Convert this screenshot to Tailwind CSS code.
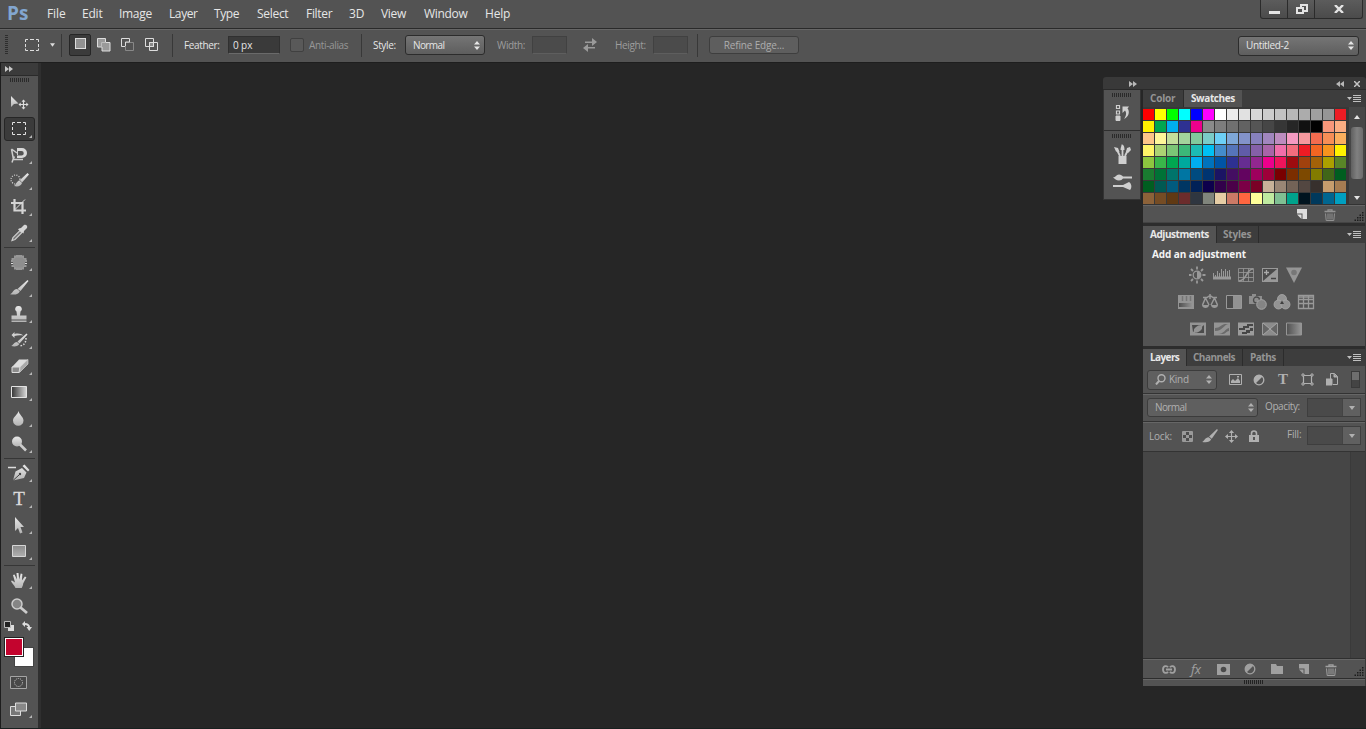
<!DOCTYPE html>
<html lang="en">

<head>
    <meta charset="UTF-8">
    <meta name="viewport" content="width=device-width, initial-scale=1.0">
    <title>Photoshop</title>
    <script src="https://cdn.jsdelivr.net/npm/@tailwindcss/browser@4"></script>
</head>

<body class="w-[1366px] h-[729px] overflow-hidden bg-[#262626] font-['Open_Sans','Noto_Sans',sans-serif] text-[#e6e6e6] flex flex-col">

    <!-- shared icon shapes -->
    <svg width="0" height="0" class="absolute">
        <defs>
            <linearGradient id="silver" x1="0" y1="0" x2="0" y2="1">
                <stop offset="0" stop-color="#e8e8e8" />
                <stop offset="1" stop-color="#b4b4b4" />
            </linearGradient>
            <linearGradient id="box" x1="0" y1="0" x2="0" y2="1">
                <stop offset="0" stop-color="#8a8a8a" />
                <stop offset="1" stop-color="#b0b0b0" />
            </linearGradient>
            <linearGradient id="fade" x1="0" x2="1">
                <stop offset="0" stop-color="#333" />
                <stop offset="1" stop-color="#d8d8d8" />
            </linearGradient>
            <linearGradient id="fade2" x1="0" x2="1">
                <stop offset="0" stop-color="#505050" />
                <stop offset="1" stop-color="#989898" />
            </linearGradient>
            <symbol id="ff" viewBox="0 0 8 6"><path d="M0 0l4 3-4 3zM4 0l4 3-4 3z" fill="currentColor" /></symbol>
            <symbol id="updown" viewBox="0 0 6 9"><path d="M0 3.6L3 0l3 3.6zM0 5.4h6L3 9z" fill="currentColor" /></symbol>
            <symbol id="down" viewBox="0 0 6 4"><path d="M0 0h6L3 4z" fill="currentColor" /></symbol>
            <symbol id="menu" viewBox="0 0 14 8"><path d="M0 2h5L2.500 5z" fill="currentColor" /><path d="M6 .5h8M6 2.500h8M6 4.500h8M6 6.500h8" stroke="currentColor" /></symbol>
            <symbol id="brush" viewBox="0 0 18 16"><path d="M17 0l1 1-7 10-3-2.500z" fill="currentColor" /><path d="M7.500 9.500l2.800 2.300c-1 3-5 4-10.300 3 3-1 3-5 7.500-5.300z" fill="currentColor" /></symbol>
            <symbol id="page" viewBox="0 0 10 10"><path d="M0 0h10v10H5.500V4.500H0z" fill="currentColor" /><path d="M0 5.500h4.500V10z" fill="currentColor" /></symbol>
            <symbol id="trash" viewBox="0 0 12 12"><path d="M.5 2.500h11M4 2V.8h4V2" stroke="currentColor" stroke-width="1.300" fill="none" /><path d="M1.500 4.500l.7 7h7.600l.7-7M4 4.500v6M6 4.500v6M8 4.500v6" stroke="currentColor" fill="none" /></symbol>
            <symbol id="resize" viewBox="0 0 10 10"><path d="M8 0h1.500v1.500H8zM5.500 2.500H7V4H5.500zM8 2.500h1.500V4H8zM3 5h1.500v1.500H3zM5.500 5H7v1.500H5.500zM8 5h1.500v1.500H8zM.5 7.500H2V9H.5zM3 7.500h1.500V9H3zM5.500 7.500H7V9H5.500zM8 7.500h1.500V9H8z" fill="#1c1c1c" /></symbol>
            <symbol id="move" viewBox="0 0 14 14"><path d="M7 1v12M1 7h12" stroke="currentColor" stroke-width="1.200" /><path d="M7 0l2.800 3.200H4.200zM7 14l2.800-3.200H4.200zM0 7l3.200-2.800v5.600zM14 7l-3.200-2.800v5.600z" fill="currentColor" /></symbol>
            <symbol id="half" viewBox="0 0 12 12"><circle cx="6" cy="6" r="4.800" fill="none" stroke="currentColor" stroke-width="1.300" /><path d="M9.500 2.500a4.900 4.900 0 0 0-7 7z" fill="currentColor" /></symbol>
            <symbol id="corner" viewBox="0 0 3 3"><path d="M3 0v3H0z" fill="#b8b8b8" /></symbol>
        </defs>
    </svg>

    <!-- menu bar -->
    <header class="h-[29px] shrink-0 bg-[#535353] border-b border-[#2a2a2a] flex items-start text-[12px] leading-[28px] whitespace-nowrap">
        <div class="w-[47px] pl-[7px] text-[19px] font-bold leading-[26px] text-[#82a6d0]">Ps</div>
        <div class="w-[35px] tracking-[-0.1px]">File</div>
        <div class="w-[37px] tracking-[-0.2px]">Edit</div>
        <div class="w-[50px] tracking-[-0.3px]">Image</div>
        <div class="w-[45px] tracking-[-0.4px]">Layer</div>
        <div class="w-[43px] tracking-[-0.4px]">Type</div>
        <div class="w-[49px] tracking-[-0.3px]">Select</div>
        <div class="w-[43px] tracking-[-0.3px]">Filter</div>
        <div class="w-[32px]">3D</div>
        <div class="w-[43px] tracking-[-0.3px]">View</div>
        <div class="w-[61px] tracking-[-0.3px]">Window</div>
        <div class="w-[40px] tracking-[-0.2px]">Help</div>
        <div class="ml-auto mr-[3px] flex h-[19px] rounded-b-[3px] border border-t-0 border-[#2b2b2b] bg-linear-to-b from-[#5c5c5c] to-[#4b4b4b]">
            <div class="w-[27px] border-r border-[#2b2b2b] flex justify-center"><div class="mt-[11px] w-[11px] h-[3px] bg-[#e4e4e4]"></div></div>
            <div class="w-[27px] border-r border-[#2b2b2b] flex justify-center">
                <svg class="mt-[4px] ml-[1px]" width="12" height="11" viewBox="0 0 12 11" fill="none" stroke="#e4e4e4" stroke-width="2"><path d="M5 3V1h6v6H8" /><path d="M1 4h6v5H1z" /></svg>
            </div>
            <div class="w-[47px] flex justify-center">
                <svg class="mt-[5px]" width="10" height="8" viewBox="0 0 10 8" stroke="#e4e4e4" stroke-width="2.400"><path d="M1 0l8 8M9 0L1 8" /></svg>
            </div>
        </div>
    </header>

    <!-- options bar -->
    <div class="h-[33px] shrink-0 bg-[#535353] border-t border-[#666] pb-[2px] flex items-center text-[10px] font-medium tracking-[-0.35px] whitespace-nowrap">
        <div class="ml-[5px] w-[3px] h-[20px] bg-[repeating-linear-gradient(#2e2e2e_0_1px,transparent_1px_2px)]"></div>
        <svg class="ml-[17px]" width="14" height="12" viewBox="0 0 14 12" fill="none" stroke="#dedede"><path d="M.5 3V.5H3M5 .5h4M11 .5h2.500V3M13.500 5v3M13.500 9.500v2H11M9 11.500H5M3 11.500H.5v-2M.5 8V5" /></svg>
        <svg class="ml-[11px] text-[#ddd]" width="5" height="4"><use href="#down" /></svg>
        <div class="ml-[6px] w-px h-[23px] bg-[#383838]"></div>
        <div class="ml-[7px] w-[22px] h-[22px] rounded-[2px] border border-[#262626] bg-[#3b3b3b] pl-[5px] pt-[3px]"><div class="w-[11px] h-[11px] border border-[#ddd] bg-[#919191]"></div></div>
        <svg class="ml-[6px]" width="14" height="14" viewBox="0 0 14 14"><path d="M.5.500h8v4h4.500v8.500h-8V9H.5z" fill="#999" stroke="#ddd" /><path d="M4.500 9V4.500H9" fill="none" stroke="#bbb" /></svg>
        <svg class="ml-[10px]" width="14" height="14" viewBox="0 0 14 14" fill="none"><path d="M4.500 4.500h8v8h-8z" stroke="#888" /><path d="M4 8.500H.5v-8h8V4H4.500v4" stroke="#ddd" /></svg>
        <svg class="ml-[10px]" width="14" height="14" viewBox="0 0 14 14" fill="none" stroke="#ddd"><path d="M4.500 4.500h4v4h-4z" fill="#888" /><path d="M.5.500h8v8h-8zM4.500 4.500h8v8h-8z" /></svg>
        <div class="ml-[13px] w-px h-[23px] bg-[#383838]"></div>
        <div class="ml-[11px] w-[44px]">Feather:</div>
        <div class="w-[52px] h-[18px] bg-[#3a3a3a] border border-[#303030] border-b-[#6a6a6a] pl-[4px] leading-[17px] tracking-[-0.1px]">0 px</div>
        <div class="ml-[10px] w-[14px] h-[14px] rounded-[2px] border border-[#404040] bg-[#595959]"></div>
        <div class="ml-[5px] w-[52px] text-[#979797]">Anti-alias</div>
        <div class="w-px h-[23px] bg-[#383838]"></div>
        <div class="ml-[11px] w-[32px]">Style:</div>
        <div class="w-[80px] h-[20px] rounded-[3px] border border-[#2c2c2c] bg-linear-to-b from-[#757575] to-[#5e5e5e] flex items-center justify-between pl-[7px] pr-[4px] tracking-[-0.6px]">Normal<svg width="6" height="9"><use href="#updown" /></svg></div>
        <div class="ml-[12px] w-[35px] text-[#9d9d9d]">Width:</div>
        <div class="w-[35px] h-[18px] bg-[#4b4b4b] border border-[#414141] border-b-[#5e5e5e]"></div>
        <svg class="ml-[16px]" width="14" height="14" viewBox="0 0 14 14" fill="#9a9a9a"><path d="M2 3.500h7V0l5 4-5 4V5H2zM12 9H5V6L0 10l5 4v-3.500h7z" /></svg>
        <div class="ml-[18px] w-[38px] text-[#9d9d9d]">Height:</div>
        <div class="w-[35px] h-[18px] bg-[#4b4b4b] border border-[#414141] border-b-[#5e5e5e]"></div>
        <div class="ml-[9px] w-px h-[23px] bg-[#383838]"></div>
        <div class="ml-[11px] w-[90px] h-[18px] rounded-[3px] border border-[#3e3e3e] bg-[#5e5e5e] text-center leading-[16px] tracking-[-0.15px] text-[#adadad]">Refine Edge...</div>
        <div class="ml-auto mr-[7px] mt-px w-[121px] h-[20px] rounded-[3px] border border-[#2c2c2c] bg-linear-to-b from-[#757575] to-[#5e5e5e] flex items-center justify-between pl-[7px] pr-[4px]">Untitled-2<svg width="6" height="9"><use href="#updown" /></svg></div>
    </div>

    <!-- workspace -->
    <main class="flex-1 min-h-0 flex items-start border-t border-[#1e1e1e] border-b border-b-[#18201f]">

        <!-- toolbox -->
        <aside class="w-[41px] h-[665px] shrink-0 border-x border-r-3 border-[#1d1d1d] border-r-[#2f2f2f] bg-[#535353] flex flex-col">
            <div class="h-[13px] shrink-0 bg-[#3b3b3b] border-b border-[#2a2a2a] pl-[4px] pt-[3px] text-[#c8c8c8]"><svg width="8" height="6"><use href="#ff" /></svg></div>
            <div class="mt-[2px] ml-[9px] w-[20px] h-[4px] shrink-0 bg-[repeating-linear-gradient(90deg,#2a2a2a_0_1px,transparent_1px_2px)]"></div>
            <div id="tools" class="mt-[8px] flex flex-col"></div>
            <div class="h-[16px] shrink-0 flex justify-between pl-[3px] pt-[2px] pr-[6px]">
                <svg width="10" height="10" viewBox="0 0 10 10"><path d="M4 4h6v6H4z" fill="#ddd" /><path d="M.5.500h6v6h-6z" fill="#222" stroke="#bbb" /></svg>
                <svg width="10" height="10" viewBox="0 0 10 10"><path d="M0 3l3-3v2c3 0 5 2 5 4h2L7.200 10 4.500 6H6c0-1-1-2-3-2v2z" fill="#ddd" /></svg>
            </div>
            <div class="relative mt-[2px] ml-[4px] h-[31px] w-[29px] shrink-0">
                <div class="absolute left-[9px] top-[10px] w-[20px] h-[20px] bg-white border border-[#444]"></div>
                <div class="absolute left-[-1px] top-0 w-[20px] h-[20px] bg-[#c3042e] border border-[#222] shadow-[inset_0_0_0_1px_#fff]"></div>
            </div>
            <div class="mt-[8px] ml-[9px]">
                <svg width="17" height="13" viewBox="0 0 17 13" fill="none"><path d="M.5.500h16v12H.5z" fill="#484848" stroke="#a5a5a5" /><circle cx="8.500" cy="6.500" r="4" stroke="#ccc" stroke-dasharray="1 1" /></svg>
            </div>
            <div class="mt-[13px] ml-[9px] flex items-end">
                <svg width="18" height="14" viewBox="0 0 18 14"><path d="M.5 4.500h10v9H.5z" fill="#777" stroke="#ddd" /><path d="M5.500 1h11v8h-11z" fill="#888" stroke="#ddd" /></svg>
                <svg class="ml-[1px] -mb-[2px]" width="3" height="3"><use href="#corner" /></svg>
            </div>
        </aside>

        <!-- docks -->
        <div class="ml-auto mt-[14px] w-[263px] flex flex-col">
            <div class="h-[13px] bg-[#393939] border-b border-[#2a2a2a] rounded-t-[3px] flex items-center text-[#b8b8b8]">
                <svg class="ml-[26px] mt-px" width="8" height="6"><use href="#ff" /></svg>
                <svg class="ml-auto mt-px mr-[10px] rotate-180" width="8" height="6"><use href="#ff" /></svg>
                <svg class="mr-[6px] mt-px" width="6" height="6" viewBox="0 0 6 6" stroke="#c4c4c4" stroke-width="1.500"><path d="M0 0l6 6M6 0L0 6" /></svg>
            </div>
            <div class="flex items-start">
                <!-- collapsed icons -->
                <div class="w-[38px] h-[110px] bg-[#535353] border border-t-0 border-[#333] flex flex-col items-center">
                    <div class="mt-[3px] w-[20px] h-[4px] bg-[repeating-linear-gradient(90deg,#2a2a2a_0_1px,transparent_1px_2px)]"></div>
                    <svg class="mt-[8px] ml-[2px]" width="16" height="18" viewBox="0 0 16 18" fill="none" stroke="#cfcfcf"><path d="M1.500 .5h3v3h-3zM1.500 6h3v3h-3z" stroke-width="1.200" /><path d="M1 11h4v4.500H1z" fill="#cfcfcf" /><path d="M14 1.500H7.500V8L10 5.500c2 2.500 1 5.500-1 8.500 5-2 6-8 3.500-10.500z" fill="#cfcfcf" stroke="none" /></svg>
                    <div class="mt-[7px] w-full h-px bg-[#2e2e2e]"></div>
                    <div class="mt-[3px] w-[20px] h-[4px] bg-[repeating-linear-gradient(90deg,#2a2a2a_0_1px,transparent_1px_2px)]"></div>
                    <svg class="mt-[6px]" width="17" height="20" viewBox="0 0 17 20" fill="#cfcfcf"><path d="M4.500 12h8v8h-8z" /><path d="M6 12L3 6M8.500 12V4M11 12l3-6" stroke="#cfcfcf" stroke-width="1.800" /><path d="M0 3l4 1 1.500 4L2 7.500zM6.500 6c0-3 1-3 1-5.500 2.500 0 3 2.500 3 5.500zM13 4l3-1 1 3-3 3-2-1z" /></svg>
                    <svg class="mt-[10px]" width="19" height="18" viewBox="0 0 19 18" fill="#cfcfcf"><path d="M0 3.500c3 0 3-3 6-3 2 0 3 1 4 2h9v2h-9c-1 1-2 2-4 2-3 0-4-2-6-3zM0 11h10l6-3c3 2 3 6 1 8l-7-3H0z" /></svg>
                </div>

                <!-- panels -->
                <div class="ml-[2px] w-[223px] bg-[#535353] border-r border-[#3a3a3a] flex flex-col text-[10px] tracking-[-0.2px] whitespace-nowrap">
                    <div class="h-[17px] bg-[#3d3d3d] flex leading-[17px] font-bold text-[#949494]">
                        <div class="w-[41px] pl-[7px] border-r border-[#2c2c2c]">Color</div>
                        <div class="w-[58px] pl-[7px] bg-[#535353] text-[#e8e8e8] tracking-[-0.4px]">Swatches</div>
                        <svg class="ml-auto mt-[5px] mr-[4px] text-[#c0c0c0]" width="14" height="8"><use href="#menu" /></svg>
                    </div>
                    <div class="h-[98px] flex bg-[#383838] border-b border-[#333]">
                        <div id="swatches" class="w-[204px] pt-[2px] grid grid-cols-[repeat(17,12px)] auto-rows-[12px]"></div>
                        <div class="ml-[2px] flex-1 bg-[#474747] flex flex-col items-center text-[#e4e4e4]">
                            <svg class="mt-[8px] rotate-180" width="6" height="4"><use href="#down" /></svg>
                            <div class="mt-[8px] w-[12px] h-[52px] rounded-[3px] bg-linear-to-r from-[#606060] via-[#808080] to-[#6c6c6c]"></div>
                            <svg class="mt-[17px]" width="6" height="4"><use href="#down" /></svg>
                        </div>
                    </div>
                    <div class="h-[17px] border-t border-[#666] flex items-center">
                        <svg class="ml-[154px] text-[#ddd]" width="10" height="10"><use href="#page" /></svg>
                        <svg class="ml-[17px] mt-px text-[#929292]" width="12" height="12"><use href="#trash" /></svg>
                        <svg class="ml-auto mr-[1px] mt-[5px]" width="10" height="10"><use href="#resize" /></svg>
                    </div>
                    <div class="h-[4px] bg-[#2d2d2d] border-t border-[#444]"></div>

                    <!-- adjustments -->
                    <div class="h-[17px] bg-[#3d3d3d] flex leading-[17px] font-bold text-[#949494]">
                        <div class="w-[73px] pl-[7px] bg-[#535353] text-[#e8e8e8] tracking-[-0.45px]">Adjustments</div>
                        <div class="w-[43px] pl-[6px] border-x border-[#2c2c2c]">Styles</div>
                        <svg class="ml-auto mt-[5px] mr-[4px] text-[#c0c0c0]" width="14" height="8"><use href="#menu" /></svg>
                    </div>
                    <div class="h-[103px] text-[#999]">
                        <div class="pl-[9px] pt-[4px] leading-[14px] font-bold tracking-[-0.08px] text-[#f4f4f4]">Add an adjustment</div>
                        <div class="ml-[46px] mt-[5px] flex gap-[6px]">
                            <svg width="18" height="18" viewBox="1 0 18 18" stroke="currentColor" stroke-width="1.800" fill="none"><circle cx="9" cy="9" r="3.800" stroke-width="1.300" /><path d="M9 5.200a3.800 3.800 0 0 1 0 7.600z" fill="currentColor" stroke="none" /><path d="M9 .5v3M9 14.500v3M1 9h2.500M14.500 9h3M3 3l2 2M13 13l2 2M15 3l-2 2M3 15l2-2" /></svg>
                            <svg width="18" height="18" viewBox="0 0 18 18" stroke="currentColor"><path d="M.5 12V7M2.500 12V9M4.500 12V5M6.500 12V7M8.500 12V3M10.500 12V5M12.500 12V3M14.500 12V5M16.500 12V4" /><path d="M0 12h18" stroke-width="3" /></svg>
                            <svg width="18" height="18" viewBox="0 0 18 18" stroke="currentColor" fill="none"><path d="M1.500 2.500h15v13h-15zM6.500 2.500v13M11.500 2.500v13M1.500 6.500h15M1.500 11.500h15" opacity=".8" /><path d="M2 15c8 0 7-12 14-12" stroke-width="1.600" /></svg>
                            <svg width="18" height="18" viewBox="0 0 18 18"><path d="M1 2h16v14H1z" fill="#999" /><path d="M2 3h14L2 15z" fill="#4b4b4b" /><path d="M3 6.500h5M5.500 4v5" stroke="#aaa" stroke-width="1.300" /><path d="M10 12.500h5" stroke="#444" stroke-width="1.500" /></svg>
                            <svg width="18" height="18" viewBox="0 0 18 18"><path d="M1 1.500h16L9 17z" fill="#969696" /><circle cx="9" cy="6.500" r="2.800" fill="#777" /></svg>
                        </div>
                        <div class="ml-[34px] mt-[9px] flex gap-[6px]">
                            <svg width="18" height="18" viewBox="0 0 18 18"><path d="M1 2h16v14H1z" fill="#949494" /><path d="M5.500 3v5M9.500 3v5M13.500 3v5" stroke="#757575" stroke-width="1.500" /><path d="M2 10h14v4H2z" fill="url(#fade2)" /></svg>
                            <svg width="18" height="18" viewBox="0 0 18 18" fill="none" stroke="currentColor" stroke-width="1.500"><path d="M9 1v5M2 4.500h4l3-2 3 2h4M4.500 5L1.500 12M4.500 5L8 12M13.500 5L10 12M13.500 5l3 7" /><path d="M1 12h7c0 4-7 4-7 0zM10 12h7c0 4-7 4-7 0z" fill="currentColor" stroke="none" /></svg>
                            <svg width="18" height="18" viewBox="0 0 18 18"><path d="M1.500 2.500h15v13h-15z" fill="#4b4b4b" stroke="currentColor" /><path d="M8 3h8v12H8z" fill="#929292" /></svg>
                            <svg width="18" height="18" viewBox="0 0 18 18"><path d="M0 3h3V1h4v2h6v8H0z" fill="#8d8d8d" /><circle cx="7.500" cy="7" r="3" fill="none" stroke="#4c4c4c" stroke-width="1.300" /><circle cx="12.500" cy="11.500" r="4.800" fill="#858585" stroke="#a6a6a6" /></svg>
                            <svg width="18" height="18" viewBox="0 0 18 18" fill="#939393" stroke="#a8a8a8" stroke-width=".8"><circle cx="9" cy="6" r="4.500" /><circle cx="5.500" cy="11.500" r="4.500" /><circle cx="12.500" cy="11.500" r="4.500" /><path d="M9 7.500l2 3.500H7z" fill="#404040" stroke="none" /></svg>
                            <svg width="18" height="18" viewBox="0 0 18 18" stroke="currentColor" fill="none"><path d="M1 2h16v3H1z" fill="#858585" stroke="none" /><path d="M1.500 2.500h15v13h-15zM6.500 2.500v13M11.500 2.500v13M1.500 6.500h15M1.500 10.500h15" stroke-width="1.300" /></svg>
                        </div>
                        <div class="ml-[46px] mt-[9px] flex gap-[6px]">
                            <svg width="18" height="18" viewBox="0 0 18 18"><path d="M1 2.500h16v13H1z" fill="#949494" /><path d="M3 5h9L4 12zM15 5v8H6z" fill="#4b4b4b" /><ellipse cx="9" cy="9" rx="4.500" ry="2.800" transform="rotate(-35 9 9)" fill="#949494" /></svg>
                            <svg width="18" height="18" viewBox="0 0 18 18"><path d="M1 2.500h16v13H1z" fill="#949494" /><path d="M2 8c5 0 7-4 10-4h4C11 4 10 11 2 11zM5 14c6 0 7-5 11-6v3c-3 0-3 3-6 3z" fill="#6a6a6a" /></svg>
                            <svg width="18" height="18" viewBox="0 0 18 18"><path d="M1 2.500h16v13H1z" fill="#9c9c9c" /><path d="M2 8h4V6h4V4h6v2h-4v2H8v2H2zM5 14v-2h4v-2h4V8h3v3h-3v2h-3v1z" fill="#464646" /></svg>
                            <svg width="18" height="18" viewBox="0 0 18 18"><path d="M1.500 3h15v12h-15z" fill="#666" stroke="#999" /><path d="M2 3h14L9 9zM2 15h14L9 9z" fill="#8c8c8c" /><path d="M2 3l14 12M16 3L2 15" stroke="#a5a5a5" /></svg>
                            <svg width="18" height="18" viewBox="0 0 18 18"><path d="M1.500 3h15v12h-15z" fill="url(#fade2)" stroke="#959595" /></svg>
                        </div>
                    </div>
                    <div class="h-[3px] bg-[#2d2d2d]"></div>

                    <!-- layers -->
                    <div class="h-[17px] bg-[#3d3d3d] flex leading-[17px] font-bold text-[#949494]">
                        <div class="w-[43px] pl-[7px] bg-[#535353] text-[#e8e8e8] tracking-[-0.6px]">Layers</div>
                        <div class="w-[57px] pl-[6px] border-x border-[#2c2c2c] tracking-[-0.5px]">Channels</div>
                        <div class="w-[41px] pl-[7px] border-r border-[#2c2c2c] tracking-[-0.5px]">Paths</div>
                        <svg class="ml-auto mt-[5px] mr-[4px] text-[#c0c0c0]" width="14" height="8"><use href="#menu" /></svg>
                    </div>
                    <div class="h-[28px] border-b border-[#333] flex items-center text-[#b0b0b0]">
                        <div class="ml-[4px] w-[70px] h-[20px] rounded-[3px] border border-[#3c3c3c] bg-[#5f5f5f] flex items-center pl-[7px] pr-[4px]">
                            <svg width="11" height="11" viewBox="0 0 11 11" fill="none" stroke="currentColor" stroke-width="1.400"><circle cx="6.500" cy="4.300" r="3.500" /><path d="M4 7l-3 3.500" stroke-width="2" /></svg>
                            <span class="ml-[3px] font-medium tracking-[-0.3px]">Kind</span><svg class="ml-auto" width="6" height="9"><use href="#updown" /></svg>
                        </div>
                        <svg class="ml-[12px]" width="13" height="11" viewBox="0 0 13 11"><path d="M.5.500h12v10H.5z" fill="none" stroke="currentColor" /><path d="M2 9V7l2-2 2 2 3-3 2 3v2zM8 2h2v1.500H8z" fill="currentColor" /></svg>
                        <svg class="ml-[11px]" width="12" height="12"><use href="#half" /></svg>
                        <span class="ml-[13px] w-[11px] font-['Liberation_Serif',serif] font-bold text-[15px]">T</span>
                        <svg class="ml-[12px]" width="13" height="13" viewBox="0 0 13 13" fill="none" stroke="currentColor"><path d="M2.500 2.500h8v8h-8z" stroke-width="1.200" /><path d="M1 1h2v2H1zM10 1h2v2h-2zM1 10h2v2H1zM10 10h2v2h-2z" fill="#535353" /></svg>
                        <svg class="ml-[12px]" width="12" height="13" viewBox="0 0 12 13"><path d="M4.500 7V.5h4l3 3v8H7" fill="none" stroke="currentColor" /><path d="M8 1v3h3.500M0 6h6v6H0z" fill="currentColor" stroke="currentColor" /></svg>
                        <div class="ml-[13px] w-[9px] h-[17px] bg-[#444] border border-[#3a3a3a]"><div class="h-[8px] bg-[#6e6e6e]"></div></div>
                    </div>
                    <div class="h-[28px] border-t border-[#666] border-b border-b-[#333] pb-px flex items-center font-medium text-[#b0b0b0]">
                        <div class="ml-[4px] w-[111px] h-[19px] rounded-[3px] border border-[#3c3c3c] bg-[#5f5f5f] flex items-center justify-between pl-[7px] pr-[3px] tracking-[-0.6px]">Normal<svg width="6" height="9"><use href="#updown" /></svg></div>
                        <div class="ml-[7px] -mt-[2px] w-[42px] tracking-[-0.4px]">Opacity:</div>
                        <div class="w-[54px] h-[19px] border border-[#3e3e3e] bg-[#4a4a4a] flex justify-end"><div class="w-[18px] bg-[#606060] border-l border-[#444] flex items-center justify-center"><svg width="6" height="4"><use href="#down" /></svg></div></div>
                    </div>
                    <div class="h-[29px] border-t border-[#666] pb-[2px] flex items-center font-medium text-[#b0b0b0]">
                        <div class="ml-[6px] w-[33px]">Lock:</div>
                        <svg width="11" height="11" viewBox="0 0 11 11" fill="none"><path d="M.5.500h10v10H.5z" fill="#4d4d4d" stroke="#999" /><path d="M1 1h3v3H1zM7 1h3v3H7zM4 4h3v3H4zM1 7h3v3H1zM7 7h3v3H7z" fill="#999" /></svg>
                        <svg class="ml-[9px]" width="16" height="14"><use href="#brush" /></svg>
                        <svg class="ml-[7px]" width="13" height="13"><use href="#move" /></svg>
                        <svg class="ml-[11px]" width="10" height="12" viewBox="0 0 10 12"><path d="M2.500 6V3.500a2.500 2.500 0 0 1 5 0V6" fill="none" stroke="currentColor" stroke-width="1.600" /><path d="M0 5h10v7H0z" fill="currentColor" /><path d="M4 7h2v3H4z" fill="#555" /></svg>
                        <div class="ml-[28px] w-[20px] -mt-[3px]">Fill:</div>
                        <div class="-mt-[1px] w-[54px] h-[19px] border border-[#3e3e3e] bg-[#4a4a4a] flex justify-end"><div class="w-[18px] bg-[#606060] border-l border-[#444] flex items-center justify-center"><svg width="6" height="4"><use href="#down" /></svg></div></div>
                    </div>
                    <div class="h-[208px] bg-[#464646] border-t border-[#333] border-b border-b-[#2f2f2f] flex justify-end"><div class="w-[15px] bg-[#404040] border-l border-[#3a3a3a]"></div></div>
                    <div class="h-[20px] border-t border-[#666] border-b border-b-[#2d2d2d] flex items-center text-[#a0a0a0]">
                        <svg class="ml-[19px] mt-px" width="14" height="9" viewBox="0 0 14 9" fill="none" stroke="currentColor" stroke-width="1.800"><path d="M6 2.200C5 .5 1 .5 1 4.500s4 4 5 2.300M8 2.200c1-1.700 5-1.700 5 2.300s-4 4-5 2.300M4 4.500h6" /></svg>
                        <span class="ml-[15px] w-[13px] italic font-medium text-[13px] leading-[16px] tracking-[-0.3px]">fx</span>
                        <svg class="ml-[13px] mt-px" width="13" height="11" viewBox="0 0 13 11"><path d="M0 0h13v11H0z" fill="currentColor" /><circle cx="6.500" cy="5.500" r="2.800" fill="#4a4a4a" /></svg>
                        <svg class="ml-[14px]" width="12" height="12"><use href="#half" /></svg>
                        <svg class="ml-[15px]" width="12" height="10" viewBox="0 0 12 10"><path d="M0 0h5l1 2h6v8H0z" fill="currentColor" /></svg>
                        <svg class="ml-[16px]" width="10" height="10"><use href="#page" /></svg>
                        <svg class="ml-[16px] mt-px" width="12" height="12"><use href="#trash" /></svg>
                        <svg class="ml-auto mr-[1px] mt-[5px]" width="10" height="10"><use href="#resize" /></svg>
                    </div>
                    <div class="h-[7px] border-t border-[#666] flex justify-center"><div class="w-[20px] h-[4px] bg-[repeating-linear-gradient(90deg,#222_0_1px,transparent_1px_2px)]"></div></div>
                </div>
            </div>
        </div>
    </main>

    <script>
        // each entry is [svg body, has flyout corner]; null is a divider
        const tools = [
            ['<path d="M2 3v11l3-3 4.500-.5z" fill="url(#silver)"/><path d="M14.500 7v9M10.500 11.500h8" stroke="#ddd" stroke-width="1.200"/><path d="M14.500 6.500l2 2.200h-4zM14.500 16.500l2-2.200h-4zM9.500 11.500l2.200-2v4zM19.500 11.500l-2.200-2v4z" fill="#ddd"/>', false],
            ['<path d="M3.500 6V3.500H6M8 3.500h4M14 3.500h2.500V6M16.500 8v3M16.500 13v2.500H14M12 15.500H8M6 15.500H3.500V13M3.500 11V8" fill="none" stroke="#e2e2e2"/>', true],
            ['<path d="M2.500 4l2 10.500H14M2.500 4L8 8M4 14.500l1.500-3M4 14.500l-1 3" fill="none" stroke="#ccc" stroke-width="1.500"/><path d="M8 3h5a5 5 0 0 1 0 10H8v-2.500h4.500a2 2 0 0 0 0-4.500H8z" fill="#d8d8d8"/><path d="M8.500 6v4" stroke="#ccc"/>', true],
            ['<circle cx="6.500" cy="8.500" r="4.500" fill="none" stroke="#ddd" stroke-width="1.200" stroke-dasharray="1 1.400"/><path d="M20 3.500L18.500 2 11 9l2 2.500zM10.500 9.500l2.500 2.500c-1 3-4 4-8 3 2-1 2.500-5 5.500-5.500z" fill="url(#silver)"/>', true],
            ['<path d="M5.500 2v11.500h11.500M2 6h11.500v11" fill="none" stroke="#d4d4d4" stroke-width="2.200"/><path d="M16 2.500L6 12.500" stroke="#ddd"/>', true],
            ['<path d="M3 17.500l1-3 7-7 2 2-7 7z" fill="#777" stroke="#ccc" stroke-width="1.200"/><path d="M10 5.500l2-.5 3-3c2-1 4 1 3 3l-3 3-.5 2.500-5.500-4z" fill="#d6d6d6"/>', true],
            null,
            ['<path d="M6 3.500v14M8 3v15M10 3v15M12 3v15M14 3.500v14M2.500 7h15M2 9h16M2 11.500h16M2.500 14h15" stroke="#ddd"/><rect x="4" y="5.500" width="12" height="10" rx="4" fill="#8e8e8e"/>', true],
            ['<path d="M18.500 2l1 1-8 10-3-2zM8 11l2.800 2.200c-1 3-4.800 4-9.800 3 3-1 3-5 7-5.200z" fill="url(#silver)"/>', true],
            ['<path d="M9.500 2a3 3 0 0 1 2 5.500l-.5 4h6.500v4H2.500v-4H8l-.5-4A3 3 0 0 1 9.500 2zM2.500 16.500h15V18h-15z" fill="url(#silver)"/>', true],
            ['<path d="M2.500 5l3-3v2c4-1 7 0 9 1.500-3-.5-6-.5-9 .5v2z" fill="#d0d0d0"/><path d="M17.500 3.500l1 1-8 9-2-2zM8 12l2.300 2c-1 2-4 3-8 2 2-1 2.700-4 5.700-4z" fill="url(#silver)"/><path d="M17 8c0 5-2 7-6 8" fill="none" stroke="#ddd" stroke-width="1.500" stroke-dasharray="1.500 1.500"/>', true],
            ['<path d="M3 11l7-7.500h9L12 11z" fill="#dedede"/><path d="M3 11h8l-1 5.500H3z" fill="#8c8c8c" stroke="#ddd"/><path d="M11 11l8-7.500v4.500l-8.500 8.500z" fill="#aaa" stroke="#ddd" stroke-width=".6"/>', true],
            ['<path d="M2.500 4.500h15v11h-15z" fill="url(#fade)" stroke="#e2e2e2"/>', true],
            ['<path d="M9.500 3c1 4 5 6 5 9.500a5 5 0 0 1-10.500 0C4 9 8.500 7 9.500 3z" fill="url(#silver)"/>', true],
            ['<circle cx="8" cy="7.500" r="5" fill="url(#silver)"/><path d="M11 10.500l6 6" stroke="#ccc" stroke-width="2.600"/>', true],
            null,
            ['<path d="M-1 4.500h8" stroke="#ddd" stroke-width="1.500"/><path d="M4 17.500L6.500 8.500 13 5l4.500 4.500L15 15 4 17.500zM13.500 3l2-1.500L20.500 7 19 8.500z" fill="url(#silver)"/><path d="M4 17.500l6-5.500" stroke="#444"/><circle cx="11" cy="11" r="1.200" fill="#444"/>', true],
            ['<text x="10" y="16" text-anchor="middle" font-family="Liberation Serif, serif" font-size="19" fill="#dcdcdc" stroke="#dcdcdc" stroke-width=".3">T</text>', true],
            ['<path d="M6 2v14l3-3 2 5.500 2.500-1L11.500 12H15z" fill="url(#silver)"/>', true],
            ['<path d="M3.500 4.500h13v11h-13z" fill="url(#box)" stroke="#d6d6d6"/>', true],
            null,
            ['<path d="M6.500 18c-1-3-4-5-4.500-7l1-.5 3 2L4 5l1.500-.5 2.500 5-.5-6.500h2l.7 6.500 1.500-6 1.700.5-.5 6.500 3-4 1.500.8-3.200 6.200c0 2-1 3-1.500 4.500z" fill="url(#silver)"/>', true],
            ['<circle cx="8" cy="8" r="5" fill="#858585" stroke="#ccc" stroke-width="1.500"/><path d="M11.500 11.500l6.500 5.500" stroke="#ccc" stroke-width="2.800"/>', false],
        ];

        document.getElementById('tools').innerHTML = tools.map((tool, i) => {
            if (!tool) {
                return '<div class="h-[3px] mx-[3px] shrink-0 flex items-center"><div class="w-full h-px bg-[#363636]"></div></div>';
            }
            const frame = i === 1 ? 'rounded-[3px] border border-[#262626] bg-[#3b3b3b]' : 'border border-transparent';
            const corner = tool[1] ? '<svg width="3" height="3" class="mt-[17px]"><use href="#corner" /></svg>' : '';
            return `<div class="ml-[3px] w-[31px] h-[24px] my-px pl-[4px] flex ${frame}"><svg class="shrink-0 mt-[1px] overflow-visible" width="20" height="20" viewBox="0 0 20 20">${tool[0]}</svg>${corner}</div>`;
        }).join('');

        const colors = `
            ff0000 ffff00 00ff00 00ffff 0000ff ff00ff ffffff ebebeb e1e1e1 d7d7d7 cccccc c2c2c2 b7b7b7 acacac a0a0a0 959595 ed1c24
            fff200 00a651 00aeef 2e3192 ec008c 8a8a8a 7d7d7d 707070 626262 555555 464646 363636 262626 111111 000000 f7977a fbad82
            fdc689 fff799 c4df9b a3d39c 82ca9c 7accc8 6dcff6 7ea7d8 8393ca 8781bd a186be bd8cbf f49ac1 f5989d f26c4f f68e56 fbaf5d
            fff568 acd373 7cc576 3cb878 1cbbb4 00bff3 448ccb 5574b9 605ca8 8560a8 a864a8 f06eaa f26d7d ed1c24 f26522 f7941d fff200
            8dc63f 39b54a 00a651 00a99d 00aeef 0072bc 0054a6 2e3192 662d91 92278f ec008c ed145b 9e0b0f a0410d a36209 aba000 598527
            1a7b30 007236 00746b 0076a3 004b80 003471 1b1464 440e62 630460 9e005d 9e0039 790000 7b2e00 7d4900 827b00 406618 005e20
            005e20 005952 005b7f 003663 002157 0d004c 32004b 4b0049 7b0046 7a0026 c7b299 998675 736357 534741 37302d c69c6d a67c52
            8c6239 754c24 603913 6b2c2c 2f3640 80857c e6cda5 cc7a66 ff6640 ffff99 bfeaa0 7fbf93 00a38c 00141f 00395c 006690 009fc0`;
        document.getElementById('swatches').innerHTML = colors.trim().split(/\s+/)
            .map(c => `<div class="w-[11px] h-[11px]" style="background:#${c}"></div>`).join('');
    </script>
</body>

</html>
